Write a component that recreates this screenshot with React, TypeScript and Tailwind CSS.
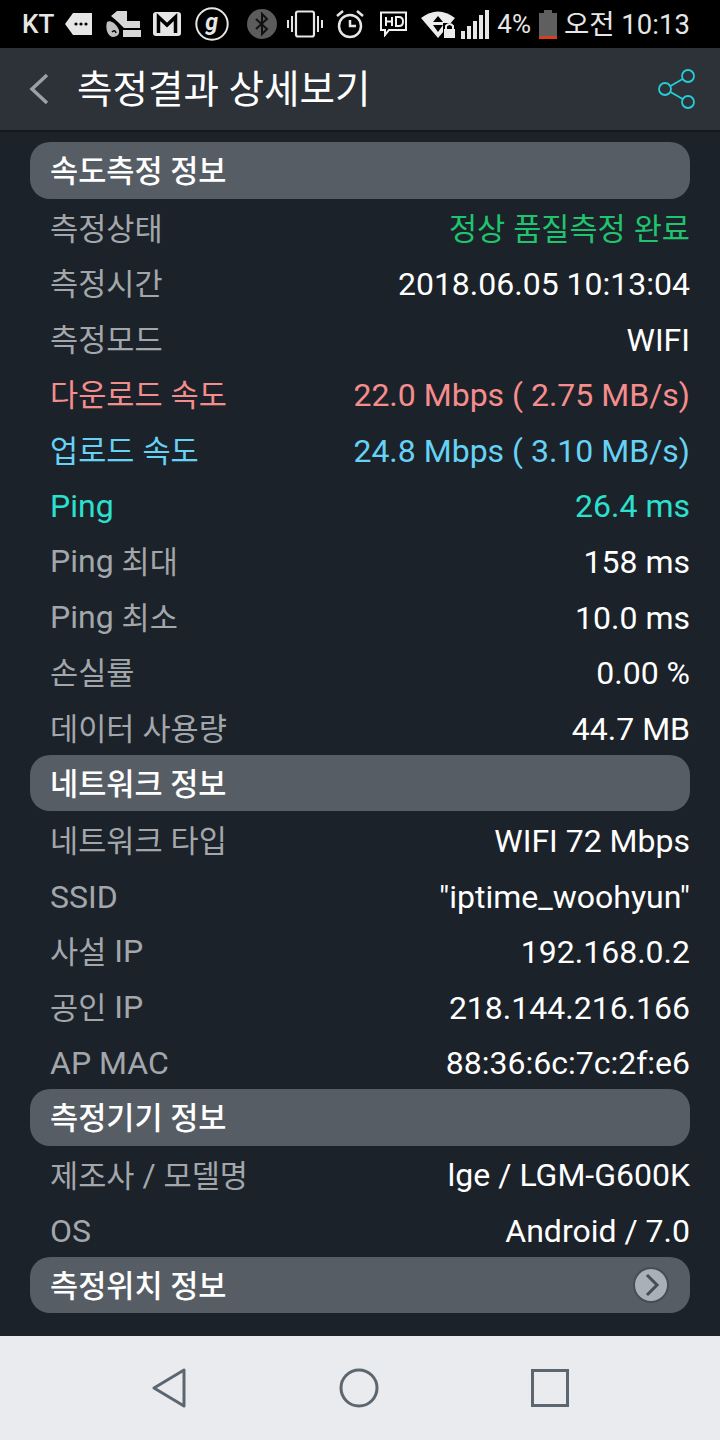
import type { ReactNode } from 'react';

const FONT = 'font-[Roboto,"Noto_Sans_CJK_KR",sans-serif]';

type Row = { label: string; value: string; color?: string; labelColor?: string };

const speedRows: Row[] = [
    { label: '측정상태', value: '정상 품질측정 완료', color: 'text-[#1fc46e]' },
    { label: '측정시간', value: '2018.06.05 10:13:04' },
    { label: '측정모드', value: 'WIFI' },
    { label: '다운로드 속도', value: '22.0 Mbps ( 2.75 MB/s)', color: 'text-[#f58d8d]', labelColor: 'text-[#f58d8d]' },
    { label: '업로드 속도', value: '24.8 Mbps ( 3.10 MB/s)', color: 'text-[#66d2f5]', labelColor: 'text-[#66d2f5]' },
    { label: 'Ping', value: '26.4 ms', color: 'text-[#2ce0cf]', labelColor: 'text-[#2ce0cf]' },
    { label: 'Ping 최대', value: '158 ms' },
    { label: 'Ping 최소', value: '10.0 ms' },
    { label: '손실률', value: '0.00 %' },
    { label: '데이터 사용량', value: '44.7 MB' },
];

const networkRows: Row[] = [
    { label: '네트워크 타입', value: 'WIFI 72 Mbps' },
    { label: 'SSID', value: '"iptime_woohyun"' },
    { label: '사설 IP', value: '192.168.0.2' },
    { label: '공인 IP', value: '218.144.216.166' },
    { label: 'AP MAC', value: '88:36:6c:7c:2f:e6' },
];

const deviceRows: Row[] = [
    { label: '제조사 / 모델명', value: 'lge / LGM-G600K' },
    { label: 'OS', value: 'Android / 7.0' },
];

// Latin runs sit a little larger than Hangul in the reference's font
function Mixed({ text }: { text: string }) {
    return (
        <>
            {text.split(/([가-힣]+)/).map((part, i) =>
                /[가-힣]/.test(part) ? (
                    <span key={i} className="align-[-1px] text-[30.6px]">{part}</span>
                ) : (
                    <span key={i} className="text-[32px] whitespace-pre">{part}</span>
                ),
            )}
        </>
    );
}

function SectionHeader({ children }: { children: ReactNode }) {
    return (
        <div className="flex h-[56.6px] items-center justify-between rounded-[20px] bg-[#565d65] pl-5 pr-[21px] pt-[4px]">
            <span className="text-[30.6px] font-medium leading-none text-white">{children}</span>
        </div>
    );
}

function InfoRow({ label, value, color = 'text-white', labelColor = 'text-[#a3a7ab]' }: Row) {
    return (
        <div className="flex h-[55.6px] items-center justify-between pl-5 pt-[4px] leading-none">
            <span className={labelColor}><Mixed text={label} /></span>
            <span className={color}><Mixed text={value} /></span>
        </div>
    );
}

function StatusBar() {
    return (
        <div className="flex h-12 items-center bg-black pl-[22px] text-[#e6e6e6]">
            <span className="text-[26px] font-medium leading-none">KT</span>
            <svg className="ml-[11px]" width="28" height="24" viewBox="0 0 28 24">
                <path d="M0 12 L8 1 H27 V23 H8 Z" fill="#e6e6e6" />
                <circle cx="11" cy="12" r="1.6" fill="#000" />
                <circle cx="16" cy="12" r="1.6" fill="#000" />
                <circle cx="21" cy="12" r="1.6" fill="#000" />
            </svg>
            <svg className="ml-[13px]" width="35" height="28" viewBox="0 0 35 28">
                <path d="M5 6 L11 1 H21 V11 H34 V18 H18 L12 12 Z" fill="#d8d8d8" />
                <path d="M17 20 H35 V27 H17 Z" fill="#d8d8d8" />
                <path d="M1 12 C4 10 9 13 12 18 C15 23 12 27 7 27 C2 27 -1 19 1 12 Z" fill="#c0c0c0" />
                <path d="M6 22 Q9 19 10 23" fill="none" stroke="#000" strokeWidth="1.5" />
            </svg>
            <svg className="ml-[12px]" width="28" height="24" viewBox="0 0 28 24">
                <rect x="0" y="0" width="28" height="24" rx="3" fill="#e6e6e6" />
                <path d="M5.5 21 V5 L14 13 L22.5 5 V21" fill="none" stroke="#000" strokeWidth="3.5" />
            </svg>
            <svg className="ml-[14px]" width="34" height="34" viewBox="0 0 34 34">
                <circle cx="17" cy="17" r="15.7" fill="none" stroke="#e6e6e6" strokeWidth="2" />
                <text x="16.5" y="23" textAnchor="middle" fontSize="23" fontStyle="italic" fontWeight="700" fill="#e6e6e6" fontFamily="Roboto">g</text>
            </svg>
            <svg className="ml-[18px]" width="30" height="30" viewBox="0 0 30 30">
                <circle cx="15" cy="15" r="15" fill="#5c5c5c" />
                <path d="M9 10 L20 20 L15 25 V5 L20 10 L9 20" fill="none" stroke="#111" strokeWidth="2" />
            </svg>
            <svg className="ml-[10px]" width="36" height="28" viewBox="0 0 36 28">
                <rect x="9" y="1.5" width="18" height="25" rx="2" fill="none" stroke="#e6e6e6" strokeWidth="2.2" />
                <path d="M1 10 V18 M5 6 V22 M31 6 V22 M35 10 V18" stroke="#e6e6e6" strokeWidth="2" />
            </svg>
            <svg className="ml-[12px]" width="30" height="30" viewBox="0 0 30 30">
                <circle cx="15" cy="17" r="11" fill="none" stroke="#e6e6e6" strokeWidth="2.5" />
                <path d="M15 11 V17 H21" fill="none" stroke="#e6e6e6" strokeWidth="2.5" />
                <path d="M2 7 L8 2 M28 7 L22 2" stroke="#e6e6e6" strokeWidth="2.5" />
            </svg>
            <svg className="ml-[14px]" width="29" height="26" viewBox="0 0 29 26">
                <path d="M2 1.5 H27 V19 H10 L6 24 V19 H2 Z" fill="none" stroke="#f0f0f0" strokeWidth="2" />
                <path d="M7 6 V15 M13 6 V15 M7 10.5 H13 M17 6 V15 H20 Q24 15 24 10.5 Q24 6 20 6 Z" fill="none" stroke="#f0f0f0" strokeWidth="2" />
            </svg>
            <svg className="ml-[13px]" width="35" height="28" viewBox="0 0 35 28">
                <path d="M0 8 Q17 -5 34 8 L17 28 Z" fill="#ececec" />
                <path d="M17 6 L22 12 H12 Z M17 22 L12 15 H22 Z" fill="#000" />
                <rect x="22" y="13" width="13" height="15" fill="#000" />
                <path d="M25 19 V16 Q28.5 12 32 16 V19" fill="none" stroke="#ececec" strokeWidth="2" />
                <rect x="23" y="19" width="11" height="9" fill="#ececec" />
            </svg>
            <svg className="ml-[5px]" width="28" height="29" viewBox="0 0 28 29">
                <rect x="0" y="21" width="4" height="8" fill="#e6e6e6" />
                <rect x="6" y="16" width="4" height="13" fill="#e6e6e6" />
                <rect x="12" y="11" width="4" height="18" fill="#e6e6e6" />
                <rect x="18" y="5" width="4" height="24" fill="#e6e6e6" />
                <rect x="24" y="0" width="4" height="29" fill="#e6e6e6" />
            </svg>
            <span className="ml-[8px] text-[26px] leading-none">4%</span>
            <svg className="ml-[8px]" width="18" height="29" viewBox="0 0 18 29">
                <path d="M5 0 H13 V3 H18 V29 H0 V3 H5 Z" fill="#5f5f5f" />
                <rect x="0" y="26" width="18" height="3" fill="#d8401c" />
            </svg>
            <span className="ml-[7px] pt-[1px] text-[27.5px] leading-none">오전 10:13</span>
        </div>
    );
}

function TitleBar() {
    return (
        <div className="flex h-[84px] items-center border-b-2 border-[#15191e] bg-[#2d3138] pl-[29px] pr-[24px]">
            <svg width="20" height="32" viewBox="0 0 20 32">
                <path d="M18 2 L3 16 L18 30" fill="none" stroke="#9aa0a6" strokeWidth="3.5" />
            </svg>
            <span className="ml-[28px] flex-1 pt-[3px] text-[38.6px] leading-none text-white">측정결과 상세보기</span>
            <svg width="38" height="40" viewBox="0 0 38 40" fill="none" stroke="#27cdd6" strokeWidth="1.8">
                <circle cx="30" cy="7" r="6" />
                <circle cx="7" cy="20" r="6" />
                <circle cx="30" cy="33" r="6" />
                <path d="M12.5 17 L24.7 10 M12.5 23 L24.7 30" />
            </svg>
        </div>
    );
}

function NavBar() {
    return (
        <div className="flex h-[104px] items-center justify-center gap-[152px] bg-[#e9ebef]">
            <svg width="36" height="40" viewBox="0 0 36 40" fill="none" stroke="#5b6670" strokeWidth="3">
                <path d="M33 2 V38 L3 20 Z" strokeLinejoin="round" />
            </svg>
            <svg width="40" height="40" viewBox="0 0 40 40" fill="none" stroke="#5b6670" strokeWidth="3">
                <circle cx="20" cy="20" r="18" />
            </svg>
            <svg width="38" height="38" viewBox="0 0 38 38" fill="none" stroke="#5b6670" strokeWidth="3">
                <rect x="1.5" y="1.5" width="35" height="35" />
            </svg>
        </div>
    );
}

export default function App() {
    return (
        <div className={`flex h-[1440px] w-[720px] flex-col overflow-hidden bg-[#1c2229] ${FONT}`}>
            <StatusBar />
            <TitleBar />
            <div className="flex-1 px-[30px] pt-[10px]">
                <SectionHeader>속도측정 정보</SectionHeader>
                {speedRows.map((row) => (
                    <InfoRow key={row.label} {...row} />
                ))}
                <SectionHeader>네트워크 정보</SectionHeader>
                {networkRows.map((row) => (
                    <InfoRow key={row.label} {...row} />
                ))}
                <SectionHeader>측정기기 정보</SectionHeader>
                {deviceRows.map((row) => (
                    <InfoRow key={row.label} {...row} />
                ))}
                <div className="flex h-[56.6px] items-center justify-between rounded-[20px] bg-[#565d65] pl-5 pr-[21px]">
                    <span className="pt-[4px] text-[30.6px] font-medium leading-none text-white">측정위치 정보</span>
                    <svg width="36" height="36" viewBox="0 0 36 36">
                        <circle cx="18" cy="18" r="17" fill="#a8b0b8" stroke="#474d54" strokeWidth="2" />
                        <path d="M14 8 L24 18 L14 28" fill="none" stroke="#474d54" strokeWidth="3" />
                    </svg>
                </div>
            </div>
            <NavBar />
        </div>
    );
}
